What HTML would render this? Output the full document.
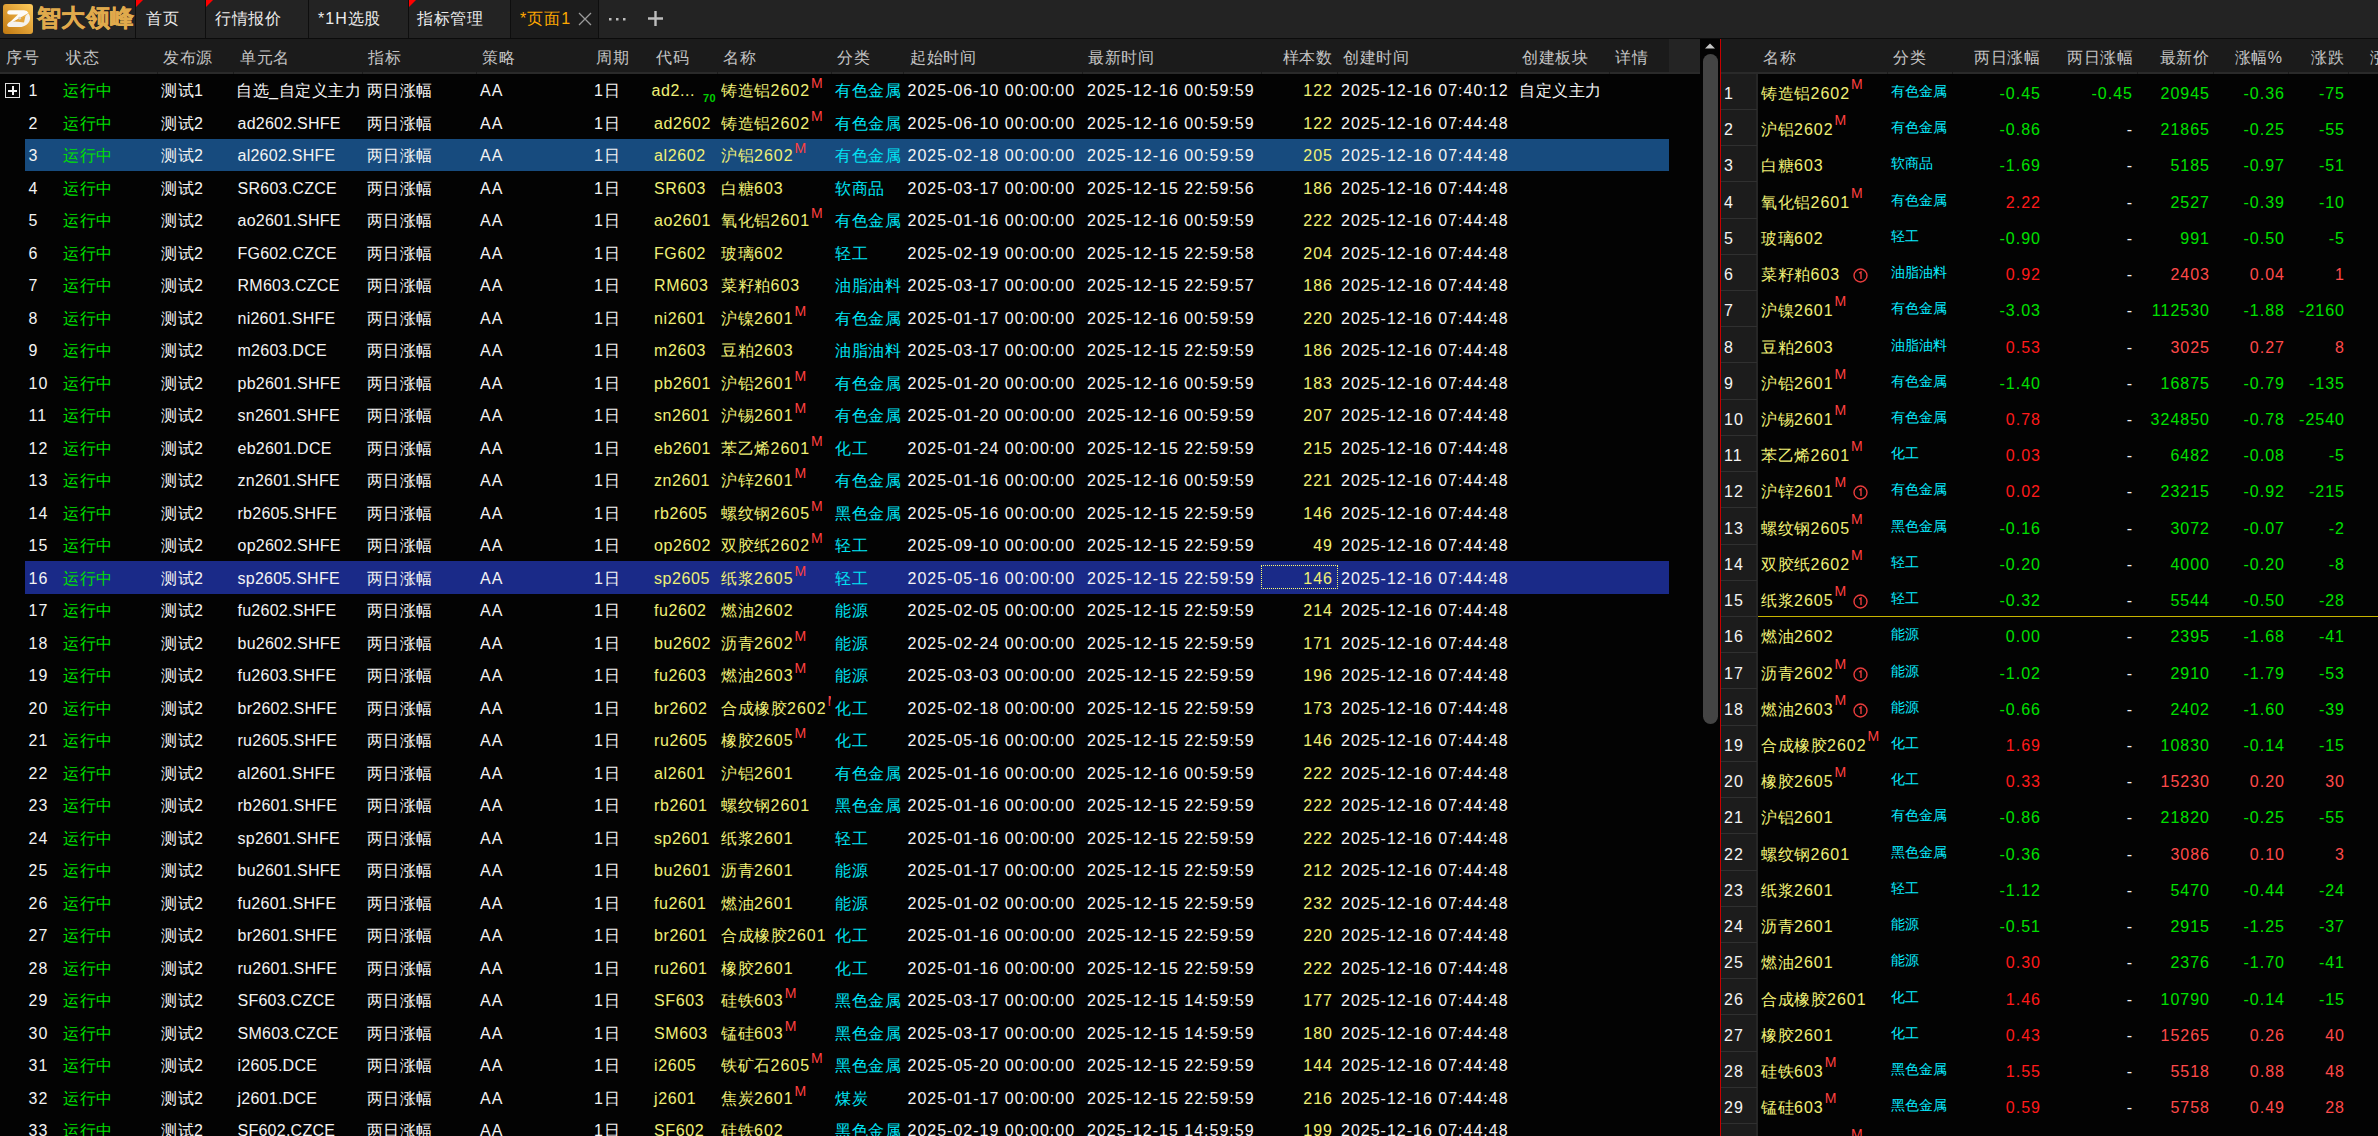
<!DOCTYPE html><html><head><meta charset="utf-8"><style>
*{margin:0;padding:0;box-sizing:border-box}
html,body{width:2378px;height:1136px;overflow:hidden;background:#030303}
body{position:relative;font-family:"Liberation Sans",sans-serif;font-size:16px;letter-spacing:1px;color:#f2f2f2}
.t{position:absolute;white-space:nowrap;line-height:20px}
.r{position:absolute}
.k{letter-spacing:0.5px}
.hd{color:#c4c4c4}
.w{color:#f4f4f4}
.g{color:#00e000}
.y{color:#f0f076}
.cy{color:#00e4f4}
.cd{letter-spacing:0.6px}
.cf{letter-spacing:0.25px}
.m{color:#ff4040;font-size:14px;letter-spacing:0;position:relative;top:-8px;margin-left:1px}
.sm{font-size:14px;letter-spacing:0;color:#08ecff}
.sm .k{letter-spacing:-0.15px}
.gr{color:#00e000}
.rd{color:#ff1a1a}
.rd2{color:#ff4a4a}
.tab{color:#ececec}
</style></head><body>
<div class="r" style="left:0;top:0;width:2378px;height:38px;background:#232323"></div>
<div class="r" style="left:0;top:38px;width:2378px;height:1px;background:#0b0b0b"></div>
<div class="r" style="left:511px;top:0;width:87px;height:38px;background:#1c1c1c"></div>
<div class="r" style="left:135px;top:0;width:1px;height:38px;background:#0e0e0e"></div>
<div class="r" style="left:205px;top:0;width:1px;height:38px;background:#0e0e0e"></div>
<div class="r" style="left:308px;top:0;width:1px;height:38px;background:#0e0e0e"></div>
<div class="r" style="left:408px;top:0;width:1px;height:38px;background:#0e0e0e"></div>
<div class="r" style="left:510px;top:0;width:1px;height:38px;background:#0e0e0e"></div>
<div class="r" style="left:598px;top:0;width:1px;height:38px;background:#0e0e0e"></div>
<div class="r" style="left:136px;top:0;width:0;height:0;border-top:7px solid #ff0000;border-right:7px solid transparent"></div>
<div class="r" style="left:206px;top:0;width:0;height:0;border-top:7px solid #ff0000;border-right:7px solid transparent"></div>
<div class="r" style="left:409px;top:0;width:0;height:0;border-top:7px solid #ff0000;border-right:7px solid transparent"></div>
<svg class="r" style="left:3px;top:4px" width="30" height="30" viewBox="0 0 30 30">
<defs><linearGradient id="lg" x1="1" y1="0" x2="0" y2="1"><stop offset="0" stop-color="#ffcc5c"/><stop offset="0.5" stop-color="#e0a035"/><stop offset="1" stop-color="#bf7810"/></linearGradient></defs>
<rect x="0" y="0" width="30" height="30" rx="3" fill="url(#lg)"/>
<path d="M6.5 6.2 H21 Q24.5 6.5 25.5 9 L7 19.5 H5.5 L15 10.6 H6.5 Q4 10.5 4.2 8.4 Q4.5 6.2 6.5 6.2 Z" fill="#fdfbf7"/>
<path d="M25.5 9.5 Q28 13 26.5 17 Q24.5 21.5 18.5 23 H6.8 Q3.8 22.8 4.2 20.6 Q4.8 18.4 8 17.6 L11 17.6 L14 17.6 L23 11.5 Q23.5 10.5 25.5 9.5 Z" fill="#f4f2ee"/>
<path d="M13 17.6 L22.5 11.8 L21 18.6 Z" fill="#e3a43a"/>
<circle cx="16.6" cy="14.2" r="1.4" fill="#d8d4cc"/>
</svg>
<div class="t" style="left:37px;top:2px;font-size:24px;line-height:32px;font-weight:bold;color:#e0aa4c;letter-spacing:0.3px;-webkit-text-stroke:0.35px #e0aa4c">智大领峰</div>
<div class="t tab" style="left:146px;top:9px;"><span class="k">首页</span></div>
<div class="t tab" style="left:215px;top:9px;"><span class="k">行情报价</span></div>
<div class="t tab" style="left:318px;top:9px;">*1H<span class="k">选股</span></div>
<div class="t tab" style="left:417px;top:9px;"><span class="k">指标管理</span></div>
<div class="t" style="left:520px;top:9px;color:#ffa800">*页面1</div>
<svg class="r" style="left:578px;top:12px" width="14" height="14"><path d="M1 1L13 13M13 1L1 13" stroke="#9a9a9a" stroke-width="1.3"/></svg>
<svg class="r" style="left:608px;top:16px" width="20" height="6"><rect x="1" y="2" width="2.5" height="2.5" fill="#bdbdbd"/><rect x="8" y="2" width="2.5" height="2.5" fill="#bdbdbd"/><rect x="15" y="2" width="2.5" height="2.5" fill="#bdbdbd"/></svg>
<svg class="r" style="left:647px;top:10px" width="17" height="17"><path d="M8.5 1V16M1 8.5H16" stroke="#bdbdbd" stroke-width="2.4"/></svg>
<div class="r" style="left:0;top:39px;width:1669px;height:33px;background:#1b1b1b"></div>
<div class="r" style="left:1669px;top:39px;width:31px;height:33px;background:#242424"></div>
<div class="r" style="left:0;top:72px;width:1700px;height:2px;background:#2a2a2a"></div>
<div class="r" style="left:157px;top:72px;width:1px;height:2px;background:#1b1b1b"></div>
<div class="r" style="left:233px;top:72px;width:1px;height:2px;background:#1b1b1b"></div>
<div class="r" style="left:362px;top:72px;width:1px;height:2px;background:#1b1b1b"></div>
<div class="r" style="left:476px;top:72px;width:1px;height:2px;background:#1b1b1b"></div>
<div class="r" style="left:717px;top:72px;width:1px;height:2px;background:#1b1b1b"></div>
<div class="r" style="left:831px;top:72px;width:1px;height:2px;background:#1b1b1b"></div>
<div class="r" style="left:903px;top:72px;width:1px;height:2px;background:#1b1b1b"></div>
<div class="r" style="left:1082px;top:72px;width:1px;height:2px;background:#1b1b1b"></div>
<div class="r" style="left:1261px;top:72px;width:1px;height:2px;background:#1b1b1b"></div>
<div class="r" style="left:1337px;top:72px;width:1px;height:2px;background:#1b1b1b"></div>
<div class="r" style="left:1516px;top:72px;width:1px;height:2px;background:#1b1b1b"></div>
<div class="r" style="left:1609px;top:72px;width:1px;height:2px;background:#1b1b1b"></div>
<div class="t hd" style="left:6px;top:48px;"><span class="k">序号</span></div>
<div class="t hd" style="left:66px;top:48px;"><span class="k">状态</span></div>
<div class="t hd" style="left:163px;top:48px;"><span class="k">发布源</span></div>
<div class="t hd" style="left:240px;top:48px;"><span class="k">单元名</span></div>
<div class="t hd" style="left:368px;top:48px;"><span class="k">指标</span></div>
<div class="t hd" style="left:482px;top:48px;"><span class="k">策略</span></div>
<div class="t hd" style="left:596px;top:48px;"><span class="k">周期</span></div>
<div class="t hd" style="left:656px;top:48px;"><span class="k">代码</span></div>
<div class="t hd" style="left:723px;top:48px;"><span class="k">名称</span></div>
<div class="t hd" style="left:837px;top:48px;"><span class="k">分类</span></div>
<div class="t hd" style="left:910px;top:48px;"><span class="k">起始时间</span></div>
<div class="t hd" style="left:1088px;top:48px;"><span class="k">最新时间</span></div>
<div class="t hd" style="left:1343px;top:48px;"><span class="k">创建时间</span></div>
<div class="t hd" style="left:1522px;top:48px;"><span class="k">创建板块</span></div>
<div class="t hd" style="left:1615px;top:48px;"><span class="k">详情</span></div>
<div class="t hd" style="right:1046px;top:48px;"><span class="k">样本数</span></div>
<div class="r" style="left:1700px;top:39px;width:20px;height:1097px;background:#030303"></div>
<svg class="r" style="left:1705px;top:43px" width="10" height="6"><path d="M0 5.5L5 0.5L10 5.5Z" fill="#c8c8c8"/></svg>
<div class="r" style="left:1702.5px;top:54px;width:15px;height:670px;border-radius:7.5px;background:#444"></div>
<div class="r" style="left:1720px;top:39px;width:1px;height:1097px;background:#c80000"></div>
<div class="r" style="left:5px;top:83px;width:15px;height:15px;border:1px solid #e0e0e0"></div>
<div class="r" style="left:8px;top:89.5px;width:9px;height:2px;background:#f0f0f0"></div>
<div class="r" style="left:11.5px;top:86px;width:2px;height:9px;background:#f0f0f0"></div>
<div class="t w" style="left:28.5px;top:81.0px;">1</div>
<div class="t g" style="left:63px;top:81.0px;"><span class="k">运行中</span></div>
<div class="t w" style="left:161px;top:81.0px;"><span class="k">测试</span>1</div>
<div class="t w" style="left:236px;top:81.0px;"><span class="k">自选</span>_<span class="k">自定义主力</span></div>
<div class="t w" style="left:366.5px;top:81.0px;"><span class="k">两日涨幅</span></div>
<div class="t w" style="left:480px;top:81.0px;">AA</div>
<div class="t w" style="left:594px;top:81.0px;">1<span class="k">日</span></div>
<div class="t y cd" style="left:651.5px;top:81.0px;">ad2...</div>
<div class="t" style="left:703px;top:88.0px;font-size:11px;font-weight:bold;letter-spacing:0.3px;color:#00d000">70</div>
<div class="t y" style="left:721px;top:71.0px;width:110px;overflow:hidden;padding-top:10px;height:36px"><span class="k">铸造铝</span>2602<span class="m">M</span></div>
<div class="t cy" style="left:835px;top:81.0px;"><span class="k">有色金属</span></div>
<div class="t w" style="left:907.5px;top:81.0px;">2025-06-10 00:00:00</div>
<div class="t w" style="left:1087px;top:81.0px;">2025-12-16 00:59:59</div>
<div class="t y" style="right:1045px;top:81.0px;">122</div>
<div class="t w" style="left:1341px;top:81.0px;">2025-12-16 07:40:12</div>
<div class="t w" style="left:1519px;top:81.0px;"><span class="k">自定义主力</span></div>
<div class="t w" style="left:28.5px;top:113.5px;">2</div>
<div class="t g" style="left:63px;top:113.5px;"><span class="k">运行中</span></div>
<div class="t w" style="left:161px;top:113.5px;"><span class="k">测试</span>2</div>
<div class="t w cf" style="left:237.5px;top:113.5px;">ad2602.SHFE</div>
<div class="t w" style="left:366.5px;top:113.5px;"><span class="k">两日涨幅</span></div>
<div class="t w" style="left:480px;top:113.5px;">AA</div>
<div class="t w" style="left:594px;top:113.5px;">1<span class="k">日</span></div>
<div class="t y cd" style="left:654px;top:113.5px;">ad2602</div>
<div class="t y" style="left:721px;top:103.5px;width:110px;overflow:hidden;padding-top:10px;height:36px"><span class="k">铸造铝</span>2602<span class="m">M</span></div>
<div class="t cy" style="left:835px;top:113.5px;"><span class="k">有色金属</span></div>
<div class="t w" style="left:907.5px;top:113.5px;">2025-06-10 00:00:00</div>
<div class="t w" style="left:1087px;top:113.5px;">2025-12-16 00:59:59</div>
<div class="t y" style="right:1045px;top:113.5px;">122</div>
<div class="t w" style="left:1341px;top:113.5px;">2025-12-16 07:44:48</div>
<div class="r" style="left:25px;top:139px;width:1644px;height:32px;background:#174b7e"></div>
<div class="t w" style="left:28.5px;top:146.0px;">3</div>
<div class="t g" style="left:63px;top:146.0px;"><span class="k">运行中</span></div>
<div class="t w" style="left:161px;top:146.0px;"><span class="k">测试</span>2</div>
<div class="t w cf" style="left:237.5px;top:146.0px;">al2602.SHFE</div>
<div class="t w" style="left:366.5px;top:146.0px;"><span class="k">两日涨幅</span></div>
<div class="t w" style="left:480px;top:146.0px;">AA</div>
<div class="t w" style="left:594px;top:146.0px;">1<span class="k">日</span></div>
<div class="t y cd" style="left:654px;top:146.0px;">al2602</div>
<div class="t y" style="left:721px;top:136.0px;width:110px;overflow:hidden;padding-top:10px;height:36px"><span class="k">沪铝</span>2602<span class="m">M</span></div>
<div class="t cy" style="left:835px;top:146.0px;"><span class="k">有色金属</span></div>
<div class="t w" style="left:907.5px;top:146.0px;">2025-02-18 00:00:00</div>
<div class="t w" style="left:1087px;top:146.0px;">2025-12-16 00:59:59</div>
<div class="t y" style="right:1045px;top:146.0px;">205</div>
<div class="t w" style="left:1341px;top:146.0px;">2025-12-16 07:44:48</div>
<div class="t w" style="left:28.5px;top:178.5px;">4</div>
<div class="t g" style="left:63px;top:178.5px;"><span class="k">运行中</span></div>
<div class="t w" style="left:161px;top:178.5px;"><span class="k">测试</span>2</div>
<div class="t w cf" style="left:237.5px;top:178.5px;">SR603.CZCE</div>
<div class="t w" style="left:366.5px;top:178.5px;"><span class="k">两日涨幅</span></div>
<div class="t w" style="left:480px;top:178.5px;">AA</div>
<div class="t w" style="left:594px;top:178.5px;">1<span class="k">日</span></div>
<div class="t y cd" style="left:654px;top:178.5px;">SR603</div>
<div class="t y" style="left:721px;top:168.5px;width:110px;overflow:hidden;padding-top:10px;height:36px"><span class="k">白糖</span>603</div>
<div class="t cy" style="left:835px;top:178.5px;"><span class="k">软商品</span></div>
<div class="t w" style="left:907.5px;top:178.5px;">2025-03-17 00:00:00</div>
<div class="t w" style="left:1087px;top:178.5px;">2025-12-15 22:59:56</div>
<div class="t y" style="right:1045px;top:178.5px;">186</div>
<div class="t w" style="left:1341px;top:178.5px;">2025-12-16 07:44:48</div>
<div class="t w" style="left:28.5px;top:211.0px;">5</div>
<div class="t g" style="left:63px;top:211.0px;"><span class="k">运行中</span></div>
<div class="t w" style="left:161px;top:211.0px;"><span class="k">测试</span>2</div>
<div class="t w cf" style="left:237.5px;top:211.0px;">ao2601.SHFE</div>
<div class="t w" style="left:366.5px;top:211.0px;"><span class="k">两日涨幅</span></div>
<div class="t w" style="left:480px;top:211.0px;">AA</div>
<div class="t w" style="left:594px;top:211.0px;">1<span class="k">日</span></div>
<div class="t y cd" style="left:654px;top:211.0px;">ao2601</div>
<div class="t y" style="left:721px;top:201.0px;width:110px;overflow:hidden;padding-top:10px;height:36px"><span class="k">氧化铝</span>2601<span class="m">M</span></div>
<div class="t cy" style="left:835px;top:211.0px;"><span class="k">有色金属</span></div>
<div class="t w" style="left:907.5px;top:211.0px;">2025-01-16 00:00:00</div>
<div class="t w" style="left:1087px;top:211.0px;">2025-12-16 00:59:59</div>
<div class="t y" style="right:1045px;top:211.0px;">222</div>
<div class="t w" style="left:1341px;top:211.0px;">2025-12-16 07:44:48</div>
<div class="t w" style="left:28.5px;top:243.5px;">6</div>
<div class="t g" style="left:63px;top:243.5px;"><span class="k">运行中</span></div>
<div class="t w" style="left:161px;top:243.5px;"><span class="k">测试</span>2</div>
<div class="t w cf" style="left:237.5px;top:243.5px;">FG602.CZCE</div>
<div class="t w" style="left:366.5px;top:243.5px;"><span class="k">两日涨幅</span></div>
<div class="t w" style="left:480px;top:243.5px;">AA</div>
<div class="t w" style="left:594px;top:243.5px;">1<span class="k">日</span></div>
<div class="t y cd" style="left:654px;top:243.5px;">FG602</div>
<div class="t y" style="left:721px;top:233.5px;width:110px;overflow:hidden;padding-top:10px;height:36px"><span class="k">玻璃</span>602</div>
<div class="t cy" style="left:835px;top:243.5px;"><span class="k">轻工</span></div>
<div class="t w" style="left:907.5px;top:243.5px;">2025-02-19 00:00:00</div>
<div class="t w" style="left:1087px;top:243.5px;">2025-12-15 22:59:58</div>
<div class="t y" style="right:1045px;top:243.5px;">204</div>
<div class="t w" style="left:1341px;top:243.5px;">2025-12-16 07:44:48</div>
<div class="t w" style="left:28.5px;top:276.0px;">7</div>
<div class="t g" style="left:63px;top:276.0px;"><span class="k">运行中</span></div>
<div class="t w" style="left:161px;top:276.0px;"><span class="k">测试</span>2</div>
<div class="t w cf" style="left:237.5px;top:276.0px;">RM603.CZCE</div>
<div class="t w" style="left:366.5px;top:276.0px;"><span class="k">两日涨幅</span></div>
<div class="t w" style="left:480px;top:276.0px;">AA</div>
<div class="t w" style="left:594px;top:276.0px;">1<span class="k">日</span></div>
<div class="t y cd" style="left:654px;top:276.0px;">RM603</div>
<div class="t y" style="left:721px;top:266.0px;width:110px;overflow:hidden;padding-top:10px;height:36px"><span class="k">菜籽粕</span>603</div>
<div class="t cy" style="left:835px;top:276.0px;"><span class="k">油脂油料</span></div>
<div class="t w" style="left:907.5px;top:276.0px;">2025-03-17 00:00:00</div>
<div class="t w" style="left:1087px;top:276.0px;">2025-12-15 22:59:57</div>
<div class="t y" style="right:1045px;top:276.0px;">186</div>
<div class="t w" style="left:1341px;top:276.0px;">2025-12-16 07:44:48</div>
<div class="t w" style="left:28.5px;top:308.5px;">8</div>
<div class="t g" style="left:63px;top:308.5px;"><span class="k">运行中</span></div>
<div class="t w" style="left:161px;top:308.5px;"><span class="k">测试</span>2</div>
<div class="t w cf" style="left:237.5px;top:308.5px;">ni2601.SHFE</div>
<div class="t w" style="left:366.5px;top:308.5px;"><span class="k">两日涨幅</span></div>
<div class="t w" style="left:480px;top:308.5px;">AA</div>
<div class="t w" style="left:594px;top:308.5px;">1<span class="k">日</span></div>
<div class="t y cd" style="left:654px;top:308.5px;">ni2601</div>
<div class="t y" style="left:721px;top:298.5px;width:110px;overflow:hidden;padding-top:10px;height:36px"><span class="k">沪镍</span>2601<span class="m">M</span></div>
<div class="t cy" style="left:835px;top:308.5px;"><span class="k">有色金属</span></div>
<div class="t w" style="left:907.5px;top:308.5px;">2025-01-17 00:00:00</div>
<div class="t w" style="left:1087px;top:308.5px;">2025-12-16 00:59:59</div>
<div class="t y" style="right:1045px;top:308.5px;">220</div>
<div class="t w" style="left:1341px;top:308.5px;">2025-12-16 07:44:48</div>
<div class="t w" style="left:28.5px;top:341.0px;">9</div>
<div class="t g" style="left:63px;top:341.0px;"><span class="k">运行中</span></div>
<div class="t w" style="left:161px;top:341.0px;"><span class="k">测试</span>2</div>
<div class="t w cf" style="left:237.5px;top:341.0px;">m2603.DCE</div>
<div class="t w" style="left:366.5px;top:341.0px;"><span class="k">两日涨幅</span></div>
<div class="t w" style="left:480px;top:341.0px;">AA</div>
<div class="t w" style="left:594px;top:341.0px;">1<span class="k">日</span></div>
<div class="t y cd" style="left:654px;top:341.0px;">m2603</div>
<div class="t y" style="left:721px;top:331.0px;width:110px;overflow:hidden;padding-top:10px;height:36px"><span class="k">豆粕</span>2603</div>
<div class="t cy" style="left:835px;top:341.0px;"><span class="k">油脂油料</span></div>
<div class="t w" style="left:907.5px;top:341.0px;">2025-03-17 00:00:00</div>
<div class="t w" style="left:1087px;top:341.0px;">2025-12-15 22:59:59</div>
<div class="t y" style="right:1045px;top:341.0px;">186</div>
<div class="t w" style="left:1341px;top:341.0px;">2025-12-16 07:44:48</div>
<div class="t w" style="left:28.5px;top:373.5px;">10</div>
<div class="t g" style="left:63px;top:373.5px;"><span class="k">运行中</span></div>
<div class="t w" style="left:161px;top:373.5px;"><span class="k">测试</span>2</div>
<div class="t w cf" style="left:237.5px;top:373.5px;">pb2601.SHFE</div>
<div class="t w" style="left:366.5px;top:373.5px;"><span class="k">两日涨幅</span></div>
<div class="t w" style="left:480px;top:373.5px;">AA</div>
<div class="t w" style="left:594px;top:373.5px;">1<span class="k">日</span></div>
<div class="t y cd" style="left:654px;top:373.5px;">pb2601</div>
<div class="t y" style="left:721px;top:363.5px;width:110px;overflow:hidden;padding-top:10px;height:36px"><span class="k">沪铅</span>2601<span class="m">M</span></div>
<div class="t cy" style="left:835px;top:373.5px;"><span class="k">有色金属</span></div>
<div class="t w" style="left:907.5px;top:373.5px;">2025-01-20 00:00:00</div>
<div class="t w" style="left:1087px;top:373.5px;">2025-12-16 00:59:59</div>
<div class="t y" style="right:1045px;top:373.5px;">183</div>
<div class="t w" style="left:1341px;top:373.5px;">2025-12-16 07:44:48</div>
<div class="t w" style="left:28.5px;top:406.0px;">11</div>
<div class="t g" style="left:63px;top:406.0px;"><span class="k">运行中</span></div>
<div class="t w" style="left:161px;top:406.0px;"><span class="k">测试</span>2</div>
<div class="t w cf" style="left:237.5px;top:406.0px;">sn2601.SHFE</div>
<div class="t w" style="left:366.5px;top:406.0px;"><span class="k">两日涨幅</span></div>
<div class="t w" style="left:480px;top:406.0px;">AA</div>
<div class="t w" style="left:594px;top:406.0px;">1<span class="k">日</span></div>
<div class="t y cd" style="left:654px;top:406.0px;">sn2601</div>
<div class="t y" style="left:721px;top:396.0px;width:110px;overflow:hidden;padding-top:10px;height:36px"><span class="k">沪锡</span>2601<span class="m">M</span></div>
<div class="t cy" style="left:835px;top:406.0px;"><span class="k">有色金属</span></div>
<div class="t w" style="left:907.5px;top:406.0px;">2025-01-20 00:00:00</div>
<div class="t w" style="left:1087px;top:406.0px;">2025-12-16 00:59:59</div>
<div class="t y" style="right:1045px;top:406.0px;">207</div>
<div class="t w" style="left:1341px;top:406.0px;">2025-12-16 07:44:48</div>
<div class="t w" style="left:28.5px;top:438.5px;">12</div>
<div class="t g" style="left:63px;top:438.5px;"><span class="k">运行中</span></div>
<div class="t w" style="left:161px;top:438.5px;"><span class="k">测试</span>2</div>
<div class="t w cf" style="left:237.5px;top:438.5px;">eb2601.DCE</div>
<div class="t w" style="left:366.5px;top:438.5px;"><span class="k">两日涨幅</span></div>
<div class="t w" style="left:480px;top:438.5px;">AA</div>
<div class="t w" style="left:594px;top:438.5px;">1<span class="k">日</span></div>
<div class="t y cd" style="left:654px;top:438.5px;">eb2601</div>
<div class="t y" style="left:721px;top:428.5px;width:110px;overflow:hidden;padding-top:10px;height:36px"><span class="k">苯乙烯</span>2601<span class="m">M</span></div>
<div class="t cy" style="left:835px;top:438.5px;"><span class="k">化工</span></div>
<div class="t w" style="left:907.5px;top:438.5px;">2025-01-24 00:00:00</div>
<div class="t w" style="left:1087px;top:438.5px;">2025-12-15 22:59:59</div>
<div class="t y" style="right:1045px;top:438.5px;">215</div>
<div class="t w" style="left:1341px;top:438.5px;">2025-12-16 07:44:48</div>
<div class="t w" style="left:28.5px;top:471.0px;">13</div>
<div class="t g" style="left:63px;top:471.0px;"><span class="k">运行中</span></div>
<div class="t w" style="left:161px;top:471.0px;"><span class="k">测试</span>2</div>
<div class="t w cf" style="left:237.5px;top:471.0px;">zn2601.SHFE</div>
<div class="t w" style="left:366.5px;top:471.0px;"><span class="k">两日涨幅</span></div>
<div class="t w" style="left:480px;top:471.0px;">AA</div>
<div class="t w" style="left:594px;top:471.0px;">1<span class="k">日</span></div>
<div class="t y cd" style="left:654px;top:471.0px;">zn2601</div>
<div class="t y" style="left:721px;top:461.0px;width:110px;overflow:hidden;padding-top:10px;height:36px"><span class="k">沪锌</span>2601<span class="m">M</span></div>
<div class="t cy" style="left:835px;top:471.0px;"><span class="k">有色金属</span></div>
<div class="t w" style="left:907.5px;top:471.0px;">2025-01-16 00:00:00</div>
<div class="t w" style="left:1087px;top:471.0px;">2025-12-16 00:59:59</div>
<div class="t y" style="right:1045px;top:471.0px;">221</div>
<div class="t w" style="left:1341px;top:471.0px;">2025-12-16 07:44:48</div>
<div class="t w" style="left:28.5px;top:503.5px;">14</div>
<div class="t g" style="left:63px;top:503.5px;"><span class="k">运行中</span></div>
<div class="t w" style="left:161px;top:503.5px;"><span class="k">测试</span>2</div>
<div class="t w cf" style="left:237.5px;top:503.5px;">rb2605.SHFE</div>
<div class="t w" style="left:366.5px;top:503.5px;"><span class="k">两日涨幅</span></div>
<div class="t w" style="left:480px;top:503.5px;">AA</div>
<div class="t w" style="left:594px;top:503.5px;">1<span class="k">日</span></div>
<div class="t y cd" style="left:654px;top:503.5px;">rb2605</div>
<div class="t y" style="left:721px;top:493.5px;width:110px;overflow:hidden;padding-top:10px;height:36px"><span class="k">螺纹钢</span>2605<span class="m">M</span></div>
<div class="t cy" style="left:835px;top:503.5px;"><span class="k">黑色金属</span></div>
<div class="t w" style="left:907.5px;top:503.5px;">2025-05-16 00:00:00</div>
<div class="t w" style="left:1087px;top:503.5px;">2025-12-15 22:59:59</div>
<div class="t y" style="right:1045px;top:503.5px;">146</div>
<div class="t w" style="left:1341px;top:503.5px;">2025-12-16 07:44:48</div>
<div class="t w" style="left:28.5px;top:536.0px;">15</div>
<div class="t g" style="left:63px;top:536.0px;"><span class="k">运行中</span></div>
<div class="t w" style="left:161px;top:536.0px;"><span class="k">测试</span>2</div>
<div class="t w cf" style="left:237.5px;top:536.0px;">op2602.SHFE</div>
<div class="t w" style="left:366.5px;top:536.0px;"><span class="k">两日涨幅</span></div>
<div class="t w" style="left:480px;top:536.0px;">AA</div>
<div class="t w" style="left:594px;top:536.0px;">1<span class="k">日</span></div>
<div class="t y cd" style="left:654px;top:536.0px;">op2602</div>
<div class="t y" style="left:721px;top:526.0px;width:110px;overflow:hidden;padding-top:10px;height:36px"><span class="k">双胶纸</span>2602<span class="m">M</span></div>
<div class="t cy" style="left:835px;top:536.0px;"><span class="k">轻工</span></div>
<div class="t w" style="left:907.5px;top:536.0px;">2025-09-10 00:00:00</div>
<div class="t w" style="left:1087px;top:536.0px;">2025-12-15 22:59:59</div>
<div class="t y" style="right:1045px;top:536.0px;">49</div>
<div class="t w" style="left:1341px;top:536.0px;">2025-12-16 07:44:48</div>
<div class="r" style="left:25px;top:561px;width:1644px;height:33px;background:#1a2a88"></div>
<div class="r" style="left:1261px;top:565px;width:77px;height:24px;border:1px dotted #ffff70;border-radius:1px"></div>
<div class="t w" style="left:28.5px;top:568.5px;">16</div>
<div class="t g" style="left:63px;top:568.5px;"><span class="k">运行中</span></div>
<div class="t w" style="left:161px;top:568.5px;"><span class="k">测试</span>2</div>
<div class="t w cf" style="left:237.5px;top:568.5px;">sp2605.SHFE</div>
<div class="t w" style="left:366.5px;top:568.5px;"><span class="k">两日涨幅</span></div>
<div class="t w" style="left:480px;top:568.5px;">AA</div>
<div class="t w" style="left:594px;top:568.5px;">1<span class="k">日</span></div>
<div class="t y cd" style="left:654px;top:568.5px;">sp2605</div>
<div class="t y" style="left:721px;top:558.5px;width:110px;overflow:hidden;padding-top:10px;height:36px"><span class="k">纸浆</span>2605<span class="m">M</span></div>
<div class="t cy" style="left:835px;top:568.5px;"><span class="k">轻工</span></div>
<div class="t w" style="left:907.5px;top:568.5px;">2025-05-16 00:00:00</div>
<div class="t w" style="left:1087px;top:568.5px;">2025-12-15 22:59:59</div>
<div class="t y" style="right:1045px;top:568.5px;">146</div>
<div class="t w" style="left:1341px;top:568.5px;">2025-12-16 07:44:48</div>
<div class="t w" style="left:28.5px;top:601.0px;">17</div>
<div class="t g" style="left:63px;top:601.0px;"><span class="k">运行中</span></div>
<div class="t w" style="left:161px;top:601.0px;"><span class="k">测试</span>2</div>
<div class="t w cf" style="left:237.5px;top:601.0px;">fu2602.SHFE</div>
<div class="t w" style="left:366.5px;top:601.0px;"><span class="k">两日涨幅</span></div>
<div class="t w" style="left:480px;top:601.0px;">AA</div>
<div class="t w" style="left:594px;top:601.0px;">1<span class="k">日</span></div>
<div class="t y cd" style="left:654px;top:601.0px;">fu2602</div>
<div class="t y" style="left:721px;top:591.0px;width:110px;overflow:hidden;padding-top:10px;height:36px"><span class="k">燃油</span>2602</div>
<div class="t cy" style="left:835px;top:601.0px;"><span class="k">能源</span></div>
<div class="t w" style="left:907.5px;top:601.0px;">2025-02-05 00:00:00</div>
<div class="t w" style="left:1087px;top:601.0px;">2025-12-15 22:59:59</div>
<div class="t y" style="right:1045px;top:601.0px;">214</div>
<div class="t w" style="left:1341px;top:601.0px;">2025-12-16 07:44:48</div>
<div class="t w" style="left:28.5px;top:633.5px;">18</div>
<div class="t g" style="left:63px;top:633.5px;"><span class="k">运行中</span></div>
<div class="t w" style="left:161px;top:633.5px;"><span class="k">测试</span>2</div>
<div class="t w cf" style="left:237.5px;top:633.5px;">bu2602.SHFE</div>
<div class="t w" style="left:366.5px;top:633.5px;"><span class="k">两日涨幅</span></div>
<div class="t w" style="left:480px;top:633.5px;">AA</div>
<div class="t w" style="left:594px;top:633.5px;">1<span class="k">日</span></div>
<div class="t y cd" style="left:654px;top:633.5px;">bu2602</div>
<div class="t y" style="left:721px;top:623.5px;width:110px;overflow:hidden;padding-top:10px;height:36px"><span class="k">沥青</span>2602<span class="m">M</span></div>
<div class="t cy" style="left:835px;top:633.5px;"><span class="k">能源</span></div>
<div class="t w" style="left:907.5px;top:633.5px;">2025-02-24 00:00:00</div>
<div class="t w" style="left:1087px;top:633.5px;">2025-12-15 22:59:59</div>
<div class="t y" style="right:1045px;top:633.5px;">171</div>
<div class="t w" style="left:1341px;top:633.5px;">2025-12-16 07:44:48</div>
<div class="t w" style="left:28.5px;top:666.0px;">19</div>
<div class="t g" style="left:63px;top:666.0px;"><span class="k">运行中</span></div>
<div class="t w" style="left:161px;top:666.0px;"><span class="k">测试</span>2</div>
<div class="t w cf" style="left:237.5px;top:666.0px;">fu2603.SHFE</div>
<div class="t w" style="left:366.5px;top:666.0px;"><span class="k">两日涨幅</span></div>
<div class="t w" style="left:480px;top:666.0px;">AA</div>
<div class="t w" style="left:594px;top:666.0px;">1<span class="k">日</span></div>
<div class="t y cd" style="left:654px;top:666.0px;">fu2603</div>
<div class="t y" style="left:721px;top:656.0px;width:110px;overflow:hidden;padding-top:10px;height:36px"><span class="k">燃油</span>2603<span class="m">M</span></div>
<div class="t cy" style="left:835px;top:666.0px;"><span class="k">能源</span></div>
<div class="t w" style="left:907.5px;top:666.0px;">2025-03-03 00:00:00</div>
<div class="t w" style="left:1087px;top:666.0px;">2025-12-15 22:59:59</div>
<div class="t y" style="right:1045px;top:666.0px;">196</div>
<div class="t w" style="left:1341px;top:666.0px;">2025-12-16 07:44:48</div>
<div class="t w" style="left:28.5px;top:698.5px;">20</div>
<div class="t g" style="left:63px;top:698.5px;"><span class="k">运行中</span></div>
<div class="t w" style="left:161px;top:698.5px;"><span class="k">测试</span>2</div>
<div class="t w cf" style="left:237.5px;top:698.5px;">br2602.SHFE</div>
<div class="t w" style="left:366.5px;top:698.5px;"><span class="k">两日涨幅</span></div>
<div class="t w" style="left:480px;top:698.5px;">AA</div>
<div class="t w" style="left:594px;top:698.5px;">1<span class="k">日</span></div>
<div class="t y cd" style="left:654px;top:698.5px;">br2602</div>
<div class="t y" style="left:721px;top:688.5px;width:110px;overflow:hidden;padding-top:10px;height:36px"><span class="k">合成橡胶</span>2602<span class="m">M</span></div>
<div class="t cy" style="left:835px;top:698.5px;"><span class="k">化工</span></div>
<div class="t w" style="left:907.5px;top:698.5px;">2025-02-18 00:00:00</div>
<div class="t w" style="left:1087px;top:698.5px;">2025-12-15 22:59:59</div>
<div class="t y" style="right:1045px;top:698.5px;">173</div>
<div class="t w" style="left:1341px;top:698.5px;">2025-12-16 07:44:48</div>
<div class="t w" style="left:28.5px;top:731.0px;">21</div>
<div class="t g" style="left:63px;top:731.0px;"><span class="k">运行中</span></div>
<div class="t w" style="left:161px;top:731.0px;"><span class="k">测试</span>2</div>
<div class="t w cf" style="left:237.5px;top:731.0px;">ru2605.SHFE</div>
<div class="t w" style="left:366.5px;top:731.0px;"><span class="k">两日涨幅</span></div>
<div class="t w" style="left:480px;top:731.0px;">AA</div>
<div class="t w" style="left:594px;top:731.0px;">1<span class="k">日</span></div>
<div class="t y cd" style="left:654px;top:731.0px;">ru2605</div>
<div class="t y" style="left:721px;top:721.0px;width:110px;overflow:hidden;padding-top:10px;height:36px"><span class="k">橡胶</span>2605<span class="m">M</span></div>
<div class="t cy" style="left:835px;top:731.0px;"><span class="k">化工</span></div>
<div class="t w" style="left:907.5px;top:731.0px;">2025-05-16 00:00:00</div>
<div class="t w" style="left:1087px;top:731.0px;">2025-12-15 22:59:59</div>
<div class="t y" style="right:1045px;top:731.0px;">146</div>
<div class="t w" style="left:1341px;top:731.0px;">2025-12-16 07:44:48</div>
<div class="t w" style="left:28.5px;top:763.5px;">22</div>
<div class="t g" style="left:63px;top:763.5px;"><span class="k">运行中</span></div>
<div class="t w" style="left:161px;top:763.5px;"><span class="k">测试</span>2</div>
<div class="t w cf" style="left:237.5px;top:763.5px;">al2601.SHFE</div>
<div class="t w" style="left:366.5px;top:763.5px;"><span class="k">两日涨幅</span></div>
<div class="t w" style="left:480px;top:763.5px;">AA</div>
<div class="t w" style="left:594px;top:763.5px;">1<span class="k">日</span></div>
<div class="t y cd" style="left:654px;top:763.5px;">al2601</div>
<div class="t y" style="left:721px;top:753.5px;width:110px;overflow:hidden;padding-top:10px;height:36px"><span class="k">沪铝</span>2601</div>
<div class="t cy" style="left:835px;top:763.5px;"><span class="k">有色金属</span></div>
<div class="t w" style="left:907.5px;top:763.5px;">2025-01-16 00:00:00</div>
<div class="t w" style="left:1087px;top:763.5px;">2025-12-16 00:59:59</div>
<div class="t y" style="right:1045px;top:763.5px;">222</div>
<div class="t w" style="left:1341px;top:763.5px;">2025-12-16 07:44:48</div>
<div class="t w" style="left:28.5px;top:796.0px;">23</div>
<div class="t g" style="left:63px;top:796.0px;"><span class="k">运行中</span></div>
<div class="t w" style="left:161px;top:796.0px;"><span class="k">测试</span>2</div>
<div class="t w cf" style="left:237.5px;top:796.0px;">rb2601.SHFE</div>
<div class="t w" style="left:366.5px;top:796.0px;"><span class="k">两日涨幅</span></div>
<div class="t w" style="left:480px;top:796.0px;">AA</div>
<div class="t w" style="left:594px;top:796.0px;">1<span class="k">日</span></div>
<div class="t y cd" style="left:654px;top:796.0px;">rb2601</div>
<div class="t y" style="left:721px;top:786.0px;width:110px;overflow:hidden;padding-top:10px;height:36px"><span class="k">螺纹钢</span>2601</div>
<div class="t cy" style="left:835px;top:796.0px;"><span class="k">黑色金属</span></div>
<div class="t w" style="left:907.5px;top:796.0px;">2025-01-16 00:00:00</div>
<div class="t w" style="left:1087px;top:796.0px;">2025-12-15 22:59:59</div>
<div class="t y" style="right:1045px;top:796.0px;">222</div>
<div class="t w" style="left:1341px;top:796.0px;">2025-12-16 07:44:48</div>
<div class="t w" style="left:28.5px;top:828.5px;">24</div>
<div class="t g" style="left:63px;top:828.5px;"><span class="k">运行中</span></div>
<div class="t w" style="left:161px;top:828.5px;"><span class="k">测试</span>2</div>
<div class="t w cf" style="left:237.5px;top:828.5px;">sp2601.SHFE</div>
<div class="t w" style="left:366.5px;top:828.5px;"><span class="k">两日涨幅</span></div>
<div class="t w" style="left:480px;top:828.5px;">AA</div>
<div class="t w" style="left:594px;top:828.5px;">1<span class="k">日</span></div>
<div class="t y cd" style="left:654px;top:828.5px;">sp2601</div>
<div class="t y" style="left:721px;top:818.5px;width:110px;overflow:hidden;padding-top:10px;height:36px"><span class="k">纸浆</span>2601</div>
<div class="t cy" style="left:835px;top:828.5px;"><span class="k">轻工</span></div>
<div class="t w" style="left:907.5px;top:828.5px;">2025-01-16 00:00:00</div>
<div class="t w" style="left:1087px;top:828.5px;">2025-12-15 22:59:59</div>
<div class="t y" style="right:1045px;top:828.5px;">222</div>
<div class="t w" style="left:1341px;top:828.5px;">2025-12-16 07:44:48</div>
<div class="t w" style="left:28.5px;top:861.0px;">25</div>
<div class="t g" style="left:63px;top:861.0px;"><span class="k">运行中</span></div>
<div class="t w" style="left:161px;top:861.0px;"><span class="k">测试</span>2</div>
<div class="t w cf" style="left:237.5px;top:861.0px;">bu2601.SHFE</div>
<div class="t w" style="left:366.5px;top:861.0px;"><span class="k">两日涨幅</span></div>
<div class="t w" style="left:480px;top:861.0px;">AA</div>
<div class="t w" style="left:594px;top:861.0px;">1<span class="k">日</span></div>
<div class="t y cd" style="left:654px;top:861.0px;">bu2601</div>
<div class="t y" style="left:721px;top:851.0px;width:110px;overflow:hidden;padding-top:10px;height:36px"><span class="k">沥青</span>2601</div>
<div class="t cy" style="left:835px;top:861.0px;"><span class="k">能源</span></div>
<div class="t w" style="left:907.5px;top:861.0px;">2025-01-17 00:00:00</div>
<div class="t w" style="left:1087px;top:861.0px;">2025-12-15 22:59:59</div>
<div class="t y" style="right:1045px;top:861.0px;">212</div>
<div class="t w" style="left:1341px;top:861.0px;">2025-12-16 07:44:48</div>
<div class="t w" style="left:28.5px;top:893.5px;">26</div>
<div class="t g" style="left:63px;top:893.5px;"><span class="k">运行中</span></div>
<div class="t w" style="left:161px;top:893.5px;"><span class="k">测试</span>2</div>
<div class="t w cf" style="left:237.5px;top:893.5px;">fu2601.SHFE</div>
<div class="t w" style="left:366.5px;top:893.5px;"><span class="k">两日涨幅</span></div>
<div class="t w" style="left:480px;top:893.5px;">AA</div>
<div class="t w" style="left:594px;top:893.5px;">1<span class="k">日</span></div>
<div class="t y cd" style="left:654px;top:893.5px;">fu2601</div>
<div class="t y" style="left:721px;top:883.5px;width:110px;overflow:hidden;padding-top:10px;height:36px"><span class="k">燃油</span>2601</div>
<div class="t cy" style="left:835px;top:893.5px;"><span class="k">能源</span></div>
<div class="t w" style="left:907.5px;top:893.5px;">2025-01-02 00:00:00</div>
<div class="t w" style="left:1087px;top:893.5px;">2025-12-15 22:59:59</div>
<div class="t y" style="right:1045px;top:893.5px;">232</div>
<div class="t w" style="left:1341px;top:893.5px;">2025-12-16 07:44:48</div>
<div class="t w" style="left:28.5px;top:926.0px;">27</div>
<div class="t g" style="left:63px;top:926.0px;"><span class="k">运行中</span></div>
<div class="t w" style="left:161px;top:926.0px;"><span class="k">测试</span>2</div>
<div class="t w cf" style="left:237.5px;top:926.0px;">br2601.SHFE</div>
<div class="t w" style="left:366.5px;top:926.0px;"><span class="k">两日涨幅</span></div>
<div class="t w" style="left:480px;top:926.0px;">AA</div>
<div class="t w" style="left:594px;top:926.0px;">1<span class="k">日</span></div>
<div class="t y cd" style="left:654px;top:926.0px;">br2601</div>
<div class="t y" style="left:721px;top:916.0px;width:110px;overflow:hidden;padding-top:10px;height:36px"><span class="k">合成橡胶</span>2601</div>
<div class="t cy" style="left:835px;top:926.0px;"><span class="k">化工</span></div>
<div class="t w" style="left:907.5px;top:926.0px;">2025-01-16 00:00:00</div>
<div class="t w" style="left:1087px;top:926.0px;">2025-12-15 22:59:59</div>
<div class="t y" style="right:1045px;top:926.0px;">220</div>
<div class="t w" style="left:1341px;top:926.0px;">2025-12-16 07:44:48</div>
<div class="t w" style="left:28.5px;top:958.5px;">28</div>
<div class="t g" style="left:63px;top:958.5px;"><span class="k">运行中</span></div>
<div class="t w" style="left:161px;top:958.5px;"><span class="k">测试</span>2</div>
<div class="t w cf" style="left:237.5px;top:958.5px;">ru2601.SHFE</div>
<div class="t w" style="left:366.5px;top:958.5px;"><span class="k">两日涨幅</span></div>
<div class="t w" style="left:480px;top:958.5px;">AA</div>
<div class="t w" style="left:594px;top:958.5px;">1<span class="k">日</span></div>
<div class="t y cd" style="left:654px;top:958.5px;">ru2601</div>
<div class="t y" style="left:721px;top:948.5px;width:110px;overflow:hidden;padding-top:10px;height:36px"><span class="k">橡胶</span>2601</div>
<div class="t cy" style="left:835px;top:958.5px;"><span class="k">化工</span></div>
<div class="t w" style="left:907.5px;top:958.5px;">2025-01-16 00:00:00</div>
<div class="t w" style="left:1087px;top:958.5px;">2025-12-15 22:59:59</div>
<div class="t y" style="right:1045px;top:958.5px;">222</div>
<div class="t w" style="left:1341px;top:958.5px;">2025-12-16 07:44:48</div>
<div class="t w" style="left:28.5px;top:991.0px;">29</div>
<div class="t g" style="left:63px;top:991.0px;"><span class="k">运行中</span></div>
<div class="t w" style="left:161px;top:991.0px;"><span class="k">测试</span>2</div>
<div class="t w cf" style="left:237.5px;top:991.0px;">SF603.CZCE</div>
<div class="t w" style="left:366.5px;top:991.0px;"><span class="k">两日涨幅</span></div>
<div class="t w" style="left:480px;top:991.0px;">AA</div>
<div class="t w" style="left:594px;top:991.0px;">1<span class="k">日</span></div>
<div class="t y cd" style="left:654px;top:991.0px;">SF603</div>
<div class="t y" style="left:721px;top:981.0px;width:110px;overflow:hidden;padding-top:10px;height:36px"><span class="k">硅铁</span>603<span class="m">M</span></div>
<div class="t cy" style="left:835px;top:991.0px;"><span class="k">黑色金属</span></div>
<div class="t w" style="left:907.5px;top:991.0px;">2025-03-17 00:00:00</div>
<div class="t w" style="left:1087px;top:991.0px;">2025-12-15 14:59:59</div>
<div class="t y" style="right:1045px;top:991.0px;">177</div>
<div class="t w" style="left:1341px;top:991.0px;">2025-12-16 07:44:48</div>
<div class="t w" style="left:28.5px;top:1023.5px;">30</div>
<div class="t g" style="left:63px;top:1023.5px;"><span class="k">运行中</span></div>
<div class="t w" style="left:161px;top:1023.5px;"><span class="k">测试</span>2</div>
<div class="t w cf" style="left:237.5px;top:1023.5px;">SM603.CZCE</div>
<div class="t w" style="left:366.5px;top:1023.5px;"><span class="k">两日涨幅</span></div>
<div class="t w" style="left:480px;top:1023.5px;">AA</div>
<div class="t w" style="left:594px;top:1023.5px;">1<span class="k">日</span></div>
<div class="t y cd" style="left:654px;top:1023.5px;">SM603</div>
<div class="t y" style="left:721px;top:1013.5px;width:110px;overflow:hidden;padding-top:10px;height:36px"><span class="k">锰硅</span>603<span class="m">M</span></div>
<div class="t cy" style="left:835px;top:1023.5px;"><span class="k">黑色金属</span></div>
<div class="t w" style="left:907.5px;top:1023.5px;">2025-03-17 00:00:00</div>
<div class="t w" style="left:1087px;top:1023.5px;">2025-12-15 14:59:59</div>
<div class="t y" style="right:1045px;top:1023.5px;">180</div>
<div class="t w" style="left:1341px;top:1023.5px;">2025-12-16 07:44:48</div>
<div class="t w" style="left:28.5px;top:1056.0px;">31</div>
<div class="t g" style="left:63px;top:1056.0px;"><span class="k">运行中</span></div>
<div class="t w" style="left:161px;top:1056.0px;"><span class="k">测试</span>2</div>
<div class="t w cf" style="left:237.5px;top:1056.0px;">i2605.DCE</div>
<div class="t w" style="left:366.5px;top:1056.0px;"><span class="k">两日涨幅</span></div>
<div class="t w" style="left:480px;top:1056.0px;">AA</div>
<div class="t w" style="left:594px;top:1056.0px;">1<span class="k">日</span></div>
<div class="t y cd" style="left:654px;top:1056.0px;">i2605</div>
<div class="t y" style="left:721px;top:1046.0px;width:110px;overflow:hidden;padding-top:10px;height:36px"><span class="k">铁矿石</span>2605<span class="m">M</span></div>
<div class="t cy" style="left:835px;top:1056.0px;"><span class="k">黑色金属</span></div>
<div class="t w" style="left:907.5px;top:1056.0px;">2025-05-20 00:00:00</div>
<div class="t w" style="left:1087px;top:1056.0px;">2025-12-15 22:59:59</div>
<div class="t y" style="right:1045px;top:1056.0px;">144</div>
<div class="t w" style="left:1341px;top:1056.0px;">2025-12-16 07:44:48</div>
<div class="t w" style="left:28.5px;top:1088.5px;">32</div>
<div class="t g" style="left:63px;top:1088.5px;"><span class="k">运行中</span></div>
<div class="t w" style="left:161px;top:1088.5px;"><span class="k">测试</span>2</div>
<div class="t w cf" style="left:237.5px;top:1088.5px;">j2601.DCE</div>
<div class="t w" style="left:366.5px;top:1088.5px;"><span class="k">两日涨幅</span></div>
<div class="t w" style="left:480px;top:1088.5px;">AA</div>
<div class="t w" style="left:594px;top:1088.5px;">1<span class="k">日</span></div>
<div class="t y cd" style="left:654px;top:1088.5px;">j2601</div>
<div class="t y" style="left:721px;top:1078.5px;width:110px;overflow:hidden;padding-top:10px;height:36px"><span class="k">焦炭</span>2601<span class="m">M</span></div>
<div class="t cy" style="left:835px;top:1088.5px;"><span class="k">煤炭</span></div>
<div class="t w" style="left:907.5px;top:1088.5px;">2025-01-17 00:00:00</div>
<div class="t w" style="left:1087px;top:1088.5px;">2025-12-15 22:59:59</div>
<div class="t y" style="right:1045px;top:1088.5px;">216</div>
<div class="t w" style="left:1341px;top:1088.5px;">2025-12-16 07:44:48</div>
<div class="t w" style="left:28.5px;top:1121.0px;">33</div>
<div class="t g" style="left:63px;top:1121.0px;"><span class="k">运行中</span></div>
<div class="t w" style="left:161px;top:1121.0px;"><span class="k">测试</span>2</div>
<div class="t w cf" style="left:237.5px;top:1121.0px;">SF602.CZCE</div>
<div class="t w" style="left:366.5px;top:1121.0px;"><span class="k">两日涨幅</span></div>
<div class="t w" style="left:480px;top:1121.0px;">AA</div>
<div class="t w" style="left:594px;top:1121.0px;">1<span class="k">日</span></div>
<div class="t y cd" style="left:654px;top:1121.0px;">SF602</div>
<div class="t y" style="left:721px;top:1111.0px;width:110px;overflow:hidden;padding-top:10px;height:36px"><span class="k">硅铁</span>602</div>
<div class="t cy" style="left:835px;top:1121.0px;"><span class="k">黑色金属</span></div>
<div class="t w" style="left:907.5px;top:1121.0px;">2025-02-19 00:00:00</div>
<div class="t w" style="left:1087px;top:1121.0px;">2025-12-15 14:59:59</div>
<div class="t y" style="right:1045px;top:1121.0px;">199</div>
<div class="t w" style="left:1341px;top:1121.0px;">2025-12-16 07:44:48</div>
<div class="r" style="left:1721px;top:39px;width:657px;height:33px;background:#1b1b1b"></div>
<div class="r" style="left:1721px;top:72px;width:657px;height:2px;background:#2a2a2a"></div>
<div class="r" style="left:1887px;top:72px;width:1px;height:2px;background:#1b1b1b"></div>
<div class="r" style="left:1952px;top:72px;width:1px;height:2px;background:#1b1b1b"></div>
<div class="r" style="left:2137px;top:72px;width:1px;height:2px;background:#1b1b1b"></div>
<div class="r" style="left:2213px;top:72px;width:1px;height:2px;background:#1b1b1b"></div>
<div class="r" style="left:2288px;top:72px;width:1px;height:2px;background:#1b1b1b"></div>
<div class="r" style="left:2348px;top:72px;width:1px;height:2px;background:#1b1b1b"></div>
<div class="t hd" style="left:1763px;top:48px;"><span class="k">名称</span></div>
<div class="t hd" style="left:1893px;top:48px;"><span class="k">分类</span></div>
<div class="t hd" style="right:338px;top:48px;"><span class="k">两日涨幅</span></div>
<div class="t hd" style="right:245px;top:48px;"><span class="k">两日涨幅</span></div>
<div class="t hd" style="right:169px;top:48px;"><span class="k">最新价</span></div>
<div class="t hd" style="right:95px;top:48px;"><span class="k">涨幅</span>%</div>
<div class="t hd" style="right:34px;top:48px;"><span class="k">涨跌</span></div>
<div class="t hd" style="left:2370px;top:48px;"><span class="k">涨跌</span></div>
<div class="r" style="left:1721px;top:74px;width:36px;height:1062px;background:#1c1c1c"></div>
<div class="r" style="left:1756px;top:74px;width:2px;height:1062px;background:#262626"></div>
<div class="r" style="left:1721px;top:109px;width:36px;height:1px;background:#303030"></div>
<div class="t w" style="left:1724px;top:84px;">1</div>
<div class="t y" style="left:1761px;top:84px;"><span class="k">铸造铝</span>2602<span class="m" style="top:-10px">M</span></div>
<div class="t cy sm" style="left:1891px;top:81px;"><span class="k">有色金属</span></div>
<div class="t gr" style="right:337px;top:84px;">-0.45</div>
<div class="t gr" style="right:245px;top:84px;">-0.45</div>
<div class="t gr" style="right:168px;top:84px;">20945</div>
<div class="t gr" style="right:93px;top:84px;">-0.36</div>
<div class="t gr" style="right:33px;top:84px;">-75</div>
<div class="r" style="left:1721px;top:145px;width:36px;height:1px;background:#303030"></div>
<div class="t w" style="left:1724px;top:120px;">2</div>
<div class="t y" style="left:1761px;top:120px;"><span class="k">沪铝</span>2602<span class="m" style="top:-10px">M</span></div>
<div class="t cy sm" style="left:1891px;top:117px;"><span class="k">有色金属</span></div>
<div class="t gr" style="right:337px;top:120px;">-0.86</div>
<div class="t w" style="right:245px;top:120px;">-</div>
<div class="t gr" style="right:168px;top:120px;">21865</div>
<div class="t gr" style="right:93px;top:120px;">-0.25</div>
<div class="t gr" style="right:33px;top:120px;">-55</div>
<div class="r" style="left:1721px;top:181px;width:36px;height:1px;background:#303030"></div>
<div class="t w" style="left:1724px;top:156px;">3</div>
<div class="t y" style="left:1761px;top:156px;"><span class="k">白糖</span>603</div>
<div class="t cy sm" style="left:1891px;top:153px;"><span class="k">软商品</span></div>
<div class="t gr" style="right:337px;top:156px;">-1.69</div>
<div class="t w" style="right:245px;top:156px;">-</div>
<div class="t gr" style="right:168px;top:156px;">5185</div>
<div class="t gr" style="right:93px;top:156px;">-0.97</div>
<div class="t gr" style="right:33px;top:156px;">-51</div>
<div class="r" style="left:1721px;top:218px;width:36px;height:1px;background:#303030"></div>
<div class="t w" style="left:1724px;top:193px;">4</div>
<div class="t y" style="left:1761px;top:193px;"><span class="k">氧化铝</span>2601<span class="m" style="top:-10px">M</span></div>
<div class="t cy sm" style="left:1891px;top:190px;"><span class="k">有色金属</span></div>
<div class="t rd" style="right:337px;top:193px;">2.22</div>
<div class="t w" style="right:245px;top:193px;">-</div>
<div class="t gr" style="right:168px;top:193px;">2527</div>
<div class="t gr" style="right:93px;top:193px;">-0.39</div>
<div class="t gr" style="right:33px;top:193px;">-10</div>
<div class="r" style="left:1721px;top:254px;width:36px;height:1px;background:#303030"></div>
<div class="t w" style="left:1724px;top:229px;">5</div>
<div class="t y" style="left:1761px;top:229px;"><span class="k">玻璃</span>602</div>
<div class="t cy sm" style="left:1891px;top:226px;"><span class="k">轻工</span></div>
<div class="t gr" style="right:337px;top:229px;">-0.90</div>
<div class="t w" style="right:245px;top:229px;">-</div>
<div class="t gr" style="right:168px;top:229px;">991</div>
<div class="t gr" style="right:93px;top:229px;">-0.50</div>
<div class="t gr" style="right:33px;top:229px;">-5</div>
<div class="r" style="left:1721px;top:290px;width:36px;height:1px;background:#303030"></div>
<div class="t w" style="left:1724px;top:265px;">6</div>
<div class="t y" style="left:1761px;top:265px;"><span class="k">菜籽粕</span>603</div>
<svg class="r" style="left:1853px;top:268px" width="15" height="15"><circle cx="7.5" cy="7.5" r="6.5" fill="none" stroke="#e83c3c" stroke-width="1.4"/><path d="M6.2 5.2L8 4V11" fill="none" stroke="#e83c3c" stroke-width="1.4"/></svg>
<div class="t cy sm" style="left:1891px;top:262px;"><span class="k">油脂油料</span></div>
<div class="t rd" style="right:337px;top:265px;">0.92</div>
<div class="t w" style="right:245px;top:265px;">-</div>
<div class="t rd2" style="right:168px;top:265px;">2403</div>
<div class="t rd2" style="right:93px;top:265px;">0.04</div>
<div class="t rd2" style="right:33px;top:265px;">1</div>
<div class="r" style="left:1721px;top:326px;width:36px;height:1px;background:#303030"></div>
<div class="t w" style="left:1724px;top:301px;">7</div>
<div class="t y" style="left:1761px;top:301px;"><span class="k">沪镍</span>2601<span class="m" style="top:-10px">M</span></div>
<div class="t cy sm" style="left:1891px;top:298px;"><span class="k">有色金属</span></div>
<div class="t gr" style="right:337px;top:301px;">-3.03</div>
<div class="t w" style="right:245px;top:301px;">-</div>
<div class="t gr" style="right:168px;top:301px;">112530</div>
<div class="t gr" style="right:93px;top:301px;">-1.88</div>
<div class="t gr" style="right:33px;top:301px;">-2160</div>
<div class="r" style="left:1721px;top:362px;width:36px;height:1px;background:#303030"></div>
<div class="t w" style="left:1724px;top:338px;">8</div>
<div class="t y" style="left:1761px;top:338px;"><span class="k">豆粕</span>2603</div>
<div class="t cy sm" style="left:1891px;top:335px;"><span class="k">油脂油料</span></div>
<div class="t rd" style="right:337px;top:338px;">0.53</div>
<div class="t w" style="right:245px;top:338px;">-</div>
<div class="t rd2" style="right:168px;top:338px;">3025</div>
<div class="t rd2" style="right:93px;top:338px;">0.27</div>
<div class="t rd2" style="right:33px;top:338px;">8</div>
<div class="r" style="left:1721px;top:399px;width:36px;height:1px;background:#303030"></div>
<div class="t w" style="left:1724px;top:374px;">9</div>
<div class="t y" style="left:1761px;top:374px;"><span class="k">沪铅</span>2601<span class="m" style="top:-10px">M</span></div>
<div class="t cy sm" style="left:1891px;top:371px;"><span class="k">有色金属</span></div>
<div class="t gr" style="right:337px;top:374px;">-1.40</div>
<div class="t w" style="right:245px;top:374px;">-</div>
<div class="t gr" style="right:168px;top:374px;">16875</div>
<div class="t gr" style="right:93px;top:374px;">-0.79</div>
<div class="t gr" style="right:33px;top:374px;">-135</div>
<div class="r" style="left:1721px;top:435px;width:36px;height:1px;background:#303030"></div>
<div class="t w" style="left:1724px;top:410px;">10</div>
<div class="t y" style="left:1761px;top:410px;"><span class="k">沪锡</span>2601<span class="m" style="top:-10px">M</span></div>
<div class="t cy sm" style="left:1891px;top:407px;"><span class="k">有色金属</span></div>
<div class="t rd" style="right:337px;top:410px;">0.78</div>
<div class="t w" style="right:245px;top:410px;">-</div>
<div class="t gr" style="right:168px;top:410px;">324850</div>
<div class="t gr" style="right:93px;top:410px;">-0.78</div>
<div class="t gr" style="right:33px;top:410px;">-2540</div>
<div class="r" style="left:1721px;top:471px;width:36px;height:1px;background:#303030"></div>
<div class="t w" style="left:1724px;top:446px;">11</div>
<div class="t y" style="left:1761px;top:446px;"><span class="k">苯乙烯</span>2601<span class="m" style="top:-10px">M</span></div>
<div class="t cy sm" style="left:1891px;top:443px;"><span class="k">化工</span></div>
<div class="t rd" style="right:337px;top:446px;">0.03</div>
<div class="t w" style="right:245px;top:446px;">-</div>
<div class="t gr" style="right:168px;top:446px;">6482</div>
<div class="t gr" style="right:93px;top:446px;">-0.08</div>
<div class="t gr" style="right:33px;top:446px;">-5</div>
<div class="r" style="left:1721px;top:507px;width:36px;height:1px;background:#303030"></div>
<div class="t w" style="left:1724px;top:482px;">12</div>
<div class="t y" style="left:1761px;top:482px;"><span class="k">沪锌</span>2601<span class="m" style="top:-10px">M</span></div>
<svg class="r" style="left:1853px;top:485px" width="15" height="15"><circle cx="7.5" cy="7.5" r="6.5" fill="none" stroke="#e83c3c" stroke-width="1.4"/><path d="M6.2 5.2L8 4V11" fill="none" stroke="#e83c3c" stroke-width="1.4"/></svg>
<div class="t cy sm" style="left:1891px;top:479px;"><span class="k">有色金属</span></div>
<div class="t rd" style="right:337px;top:482px;">0.02</div>
<div class="t w" style="right:245px;top:482px;">-</div>
<div class="t gr" style="right:168px;top:482px;">23215</div>
<div class="t gr" style="right:93px;top:482px;">-0.92</div>
<div class="t gr" style="right:33px;top:482px;">-215</div>
<div class="r" style="left:1721px;top:544px;width:36px;height:1px;background:#303030"></div>
<div class="t w" style="left:1724px;top:519px;">13</div>
<div class="t y" style="left:1761px;top:519px;"><span class="k">螺纹钢</span>2605<span class="m" style="top:-10px">M</span></div>
<div class="t cy sm" style="left:1891px;top:516px;"><span class="k">黑色金属</span></div>
<div class="t gr" style="right:337px;top:519px;">-0.16</div>
<div class="t w" style="right:245px;top:519px;">-</div>
<div class="t gr" style="right:168px;top:519px;">3072</div>
<div class="t gr" style="right:93px;top:519px;">-0.07</div>
<div class="t gr" style="right:33px;top:519px;">-2</div>
<div class="r" style="left:1721px;top:580px;width:36px;height:1px;background:#303030"></div>
<div class="t w" style="left:1724px;top:555px;">14</div>
<div class="t y" style="left:1761px;top:555px;"><span class="k">双胶纸</span>2602<span class="m" style="top:-10px">M</span></div>
<div class="t cy sm" style="left:1891px;top:552px;"><span class="k">轻工</span></div>
<div class="t gr" style="right:337px;top:555px;">-0.20</div>
<div class="t w" style="right:245px;top:555px;">-</div>
<div class="t gr" style="right:168px;top:555px;">4000</div>
<div class="t gr" style="right:93px;top:555px;">-0.20</div>
<div class="t gr" style="right:33px;top:555px;">-8</div>
<div class="r" style="left:1721px;top:616px;width:36px;height:1px;background:#303030"></div>
<div class="t w" style="left:1724px;top:591px;">15</div>
<div class="t y" style="left:1761px;top:591px;"><span class="k">纸浆</span>2605<span class="m" style="top:-10px">M</span></div>
<svg class="r" style="left:1853px;top:594px" width="15" height="15"><circle cx="7.5" cy="7.5" r="6.5" fill="none" stroke="#e83c3c" stroke-width="1.4"/><path d="M6.2 5.2L8 4V11" fill="none" stroke="#e83c3c" stroke-width="1.4"/></svg>
<div class="r" style="left:1758px;top:616px;width:620px;height:1px;background:#c8b400"></div>
<div class="t cy sm" style="left:1891px;top:588px;"><span class="k">轻工</span></div>
<div class="t gr" style="right:337px;top:591px;">-0.32</div>
<div class="t w" style="right:245px;top:591px;">-</div>
<div class="t gr" style="right:168px;top:591px;">5544</div>
<div class="t gr" style="right:93px;top:591px;">-0.50</div>
<div class="t gr" style="right:33px;top:591px;">-28</div>
<div class="r" style="left:1721px;top:652px;width:36px;height:1px;background:#303030"></div>
<div class="t w" style="left:1724px;top:627px;">16</div>
<div class="t y" style="left:1761px;top:627px;"><span class="k">燃油</span>2602</div>
<div class="t cy sm" style="left:1891px;top:624px;"><span class="k">能源</span></div>
<div class="t gr" style="right:337px;top:627px;">0.00</div>
<div class="t w" style="right:245px;top:627px;">-</div>
<div class="t gr" style="right:168px;top:627px;">2395</div>
<div class="t gr" style="right:93px;top:627px;">-1.68</div>
<div class="t gr" style="right:33px;top:627px;">-41</div>
<div class="r" style="left:1721px;top:688px;width:36px;height:1px;background:#303030"></div>
<div class="t w" style="left:1724px;top:664px;">17</div>
<div class="t y" style="left:1761px;top:664px;"><span class="k">沥青</span>2602<span class="m" style="top:-10px">M</span></div>
<svg class="r" style="left:1853px;top:667px" width="15" height="15"><circle cx="7.5" cy="7.5" r="6.5" fill="none" stroke="#e83c3c" stroke-width="1.4"/><path d="M6.2 5.2L8 4V11" fill="none" stroke="#e83c3c" stroke-width="1.4"/></svg>
<div class="t cy sm" style="left:1891px;top:661px;"><span class="k">能源</span></div>
<div class="t gr" style="right:337px;top:664px;">-1.02</div>
<div class="t w" style="right:245px;top:664px;">-</div>
<div class="t gr" style="right:168px;top:664px;">2910</div>
<div class="t gr" style="right:93px;top:664px;">-1.79</div>
<div class="t gr" style="right:33px;top:664px;">-53</div>
<div class="r" style="left:1721px;top:725px;width:36px;height:1px;background:#303030"></div>
<div class="t w" style="left:1724px;top:700px;">18</div>
<div class="t y" style="left:1761px;top:700px;"><span class="k">燃油</span>2603<span class="m" style="top:-10px">M</span></div>
<svg class="r" style="left:1853px;top:703px" width="15" height="15"><circle cx="7.5" cy="7.5" r="6.5" fill="none" stroke="#e83c3c" stroke-width="1.4"/><path d="M6.2 5.2L8 4V11" fill="none" stroke="#e83c3c" stroke-width="1.4"/></svg>
<div class="t cy sm" style="left:1891px;top:697px;"><span class="k">能源</span></div>
<div class="t gr" style="right:337px;top:700px;">-0.66</div>
<div class="t w" style="right:245px;top:700px;">-</div>
<div class="t gr" style="right:168px;top:700px;">2402</div>
<div class="t gr" style="right:93px;top:700px;">-1.60</div>
<div class="t gr" style="right:33px;top:700px;">-39</div>
<div class="r" style="left:1721px;top:761px;width:36px;height:1px;background:#303030"></div>
<div class="t w" style="left:1724px;top:736px;">19</div>
<div class="t y" style="left:1761px;top:736px;"><span class="k">合成橡胶</span>2602<span class="m" style="top:-10px">M</span></div>
<div class="t cy sm" style="left:1891px;top:733px;"><span class="k">化工</span></div>
<div class="t rd" style="right:337px;top:736px;">1.69</div>
<div class="t w" style="right:245px;top:736px;">-</div>
<div class="t gr" style="right:168px;top:736px;">10830</div>
<div class="t gr" style="right:93px;top:736px;">-0.14</div>
<div class="t gr" style="right:33px;top:736px;">-15</div>
<div class="r" style="left:1721px;top:797px;width:36px;height:1px;background:#303030"></div>
<div class="t w" style="left:1724px;top:772px;">20</div>
<div class="t y" style="left:1761px;top:772px;"><span class="k">橡胶</span>2605<span class="m" style="top:-10px">M</span></div>
<div class="t cy sm" style="left:1891px;top:769px;"><span class="k">化工</span></div>
<div class="t rd" style="right:337px;top:772px;">0.33</div>
<div class="t w" style="right:245px;top:772px;">-</div>
<div class="t rd2" style="right:168px;top:772px;">15230</div>
<div class="t rd2" style="right:93px;top:772px;">0.20</div>
<div class="t rd2" style="right:33px;top:772px;">30</div>
<div class="r" style="left:1721px;top:833px;width:36px;height:1px;background:#303030"></div>
<div class="t w" style="left:1724px;top:808px;">21</div>
<div class="t y" style="left:1761px;top:808px;"><span class="k">沪铝</span>2601</div>
<div class="t cy sm" style="left:1891px;top:805px;"><span class="k">有色金属</span></div>
<div class="t gr" style="right:337px;top:808px;">-0.86</div>
<div class="t w" style="right:245px;top:808px;">-</div>
<div class="t gr" style="right:168px;top:808px;">21820</div>
<div class="t gr" style="right:93px;top:808px;">-0.25</div>
<div class="t gr" style="right:33px;top:808px;">-55</div>
<div class="r" style="left:1721px;top:870px;width:36px;height:1px;background:#303030"></div>
<div class="t w" style="left:1724px;top:845px;">22</div>
<div class="t y" style="left:1761px;top:845px;"><span class="k">螺纹钢</span>2601</div>
<div class="t cy sm" style="left:1891px;top:842px;"><span class="k">黑色金属</span></div>
<div class="t gr" style="right:337px;top:845px;">-0.36</div>
<div class="t w" style="right:245px;top:845px;">-</div>
<div class="t rd2" style="right:168px;top:845px;">3086</div>
<div class="t rd2" style="right:93px;top:845px;">0.10</div>
<div class="t rd2" style="right:33px;top:845px;">3</div>
<div class="r" style="left:1721px;top:906px;width:36px;height:1px;background:#303030"></div>
<div class="t w" style="left:1724px;top:881px;">23</div>
<div class="t y" style="left:1761px;top:881px;"><span class="k">纸浆</span>2601</div>
<div class="t cy sm" style="left:1891px;top:878px;"><span class="k">轻工</span></div>
<div class="t gr" style="right:337px;top:881px;">-1.12</div>
<div class="t w" style="right:245px;top:881px;">-</div>
<div class="t gr" style="right:168px;top:881px;">5470</div>
<div class="t gr" style="right:93px;top:881px;">-0.44</div>
<div class="t gr" style="right:33px;top:881px;">-24</div>
<div class="r" style="left:1721px;top:942px;width:36px;height:1px;background:#303030"></div>
<div class="t w" style="left:1724px;top:917px;">24</div>
<div class="t y" style="left:1761px;top:917px;"><span class="k">沥青</span>2601</div>
<div class="t cy sm" style="left:1891px;top:914px;"><span class="k">能源</span></div>
<div class="t gr" style="right:337px;top:917px;">-0.51</div>
<div class="t w" style="right:245px;top:917px;">-</div>
<div class="t gr" style="right:168px;top:917px;">2915</div>
<div class="t gr" style="right:93px;top:917px;">-1.25</div>
<div class="t gr" style="right:33px;top:917px;">-37</div>
<div class="r" style="left:1721px;top:978px;width:36px;height:1px;background:#303030"></div>
<div class="t w" style="left:1724px;top:953px;">25</div>
<div class="t y" style="left:1761px;top:953px;"><span class="k">燃油</span>2601</div>
<div class="t cy sm" style="left:1891px;top:950px;"><span class="k">能源</span></div>
<div class="t rd" style="right:337px;top:953px;">0.30</div>
<div class="t w" style="right:245px;top:953px;">-</div>
<div class="t gr" style="right:168px;top:953px;">2376</div>
<div class="t gr" style="right:93px;top:953px;">-1.70</div>
<div class="t gr" style="right:33px;top:953px;">-41</div>
<div class="r" style="left:1721px;top:1014px;width:36px;height:1px;background:#303030"></div>
<div class="t w" style="left:1724px;top:990px;">26</div>
<div class="t y" style="left:1761px;top:990px;"><span class="k">合成橡胶</span>2601</div>
<div class="t cy sm" style="left:1891px;top:987px;"><span class="k">化工</span></div>
<div class="t rd" style="right:337px;top:990px;">1.46</div>
<div class="t w" style="right:245px;top:990px;">-</div>
<div class="t gr" style="right:168px;top:990px;">10790</div>
<div class="t gr" style="right:93px;top:990px;">-0.14</div>
<div class="t gr" style="right:33px;top:990px;">-15</div>
<div class="r" style="left:1721px;top:1051px;width:36px;height:1px;background:#303030"></div>
<div class="t w" style="left:1724px;top:1026px;">27</div>
<div class="t y" style="left:1761px;top:1026px;"><span class="k">橡胶</span>2601</div>
<div class="t cy sm" style="left:1891px;top:1023px;"><span class="k">化工</span></div>
<div class="t rd" style="right:337px;top:1026px;">0.43</div>
<div class="t w" style="right:245px;top:1026px;">-</div>
<div class="t rd2" style="right:168px;top:1026px;">15265</div>
<div class="t rd2" style="right:93px;top:1026px;">0.26</div>
<div class="t rd2" style="right:33px;top:1026px;">40</div>
<div class="r" style="left:1721px;top:1087px;width:36px;height:1px;background:#303030"></div>
<div class="t w" style="left:1724px;top:1062px;">28</div>
<div class="t y" style="left:1761px;top:1062px;"><span class="k">硅铁</span>603<span class="m" style="top:-10px">M</span></div>
<div class="t cy sm" style="left:1891px;top:1059px;"><span class="k">黑色金属</span></div>
<div class="t rd" style="right:337px;top:1062px;">1.55</div>
<div class="t w" style="right:245px;top:1062px;">-</div>
<div class="t rd2" style="right:168px;top:1062px;">5518</div>
<div class="t rd2" style="right:93px;top:1062px;">0.88</div>
<div class="t rd2" style="right:33px;top:1062px;">48</div>
<div class="r" style="left:1721px;top:1123px;width:36px;height:1px;background:#303030"></div>
<div class="t w" style="left:1724px;top:1098px;">29</div>
<div class="t y" style="left:1761px;top:1098px;"><span class="k">锰硅</span>603<span class="m" style="top:-10px">M</span></div>
<div class="t cy sm" style="left:1891px;top:1095px;"><span class="k">黑色金属</span></div>
<div class="t rd" style="right:337px;top:1098px;">0.59</div>
<div class="t w" style="right:245px;top:1098px;">-</div>
<div class="t rd2" style="right:168px;top:1098px;">5758</div>
<div class="t rd2" style="right:93px;top:1098px;">0.49</div>
<div class="t rd2" style="right:33px;top:1098px;">28</div>
<div class="r" style="left:1721px;top:1159px;width:36px;height:1px;background:#303030"></div>
<div class="t w" style="left:1724px;top:1134px;">30</div>
<div class="t" style="left:1850px;top:1134px"><span class="m" style="top:-10px">M</span></div>
</body></html>
